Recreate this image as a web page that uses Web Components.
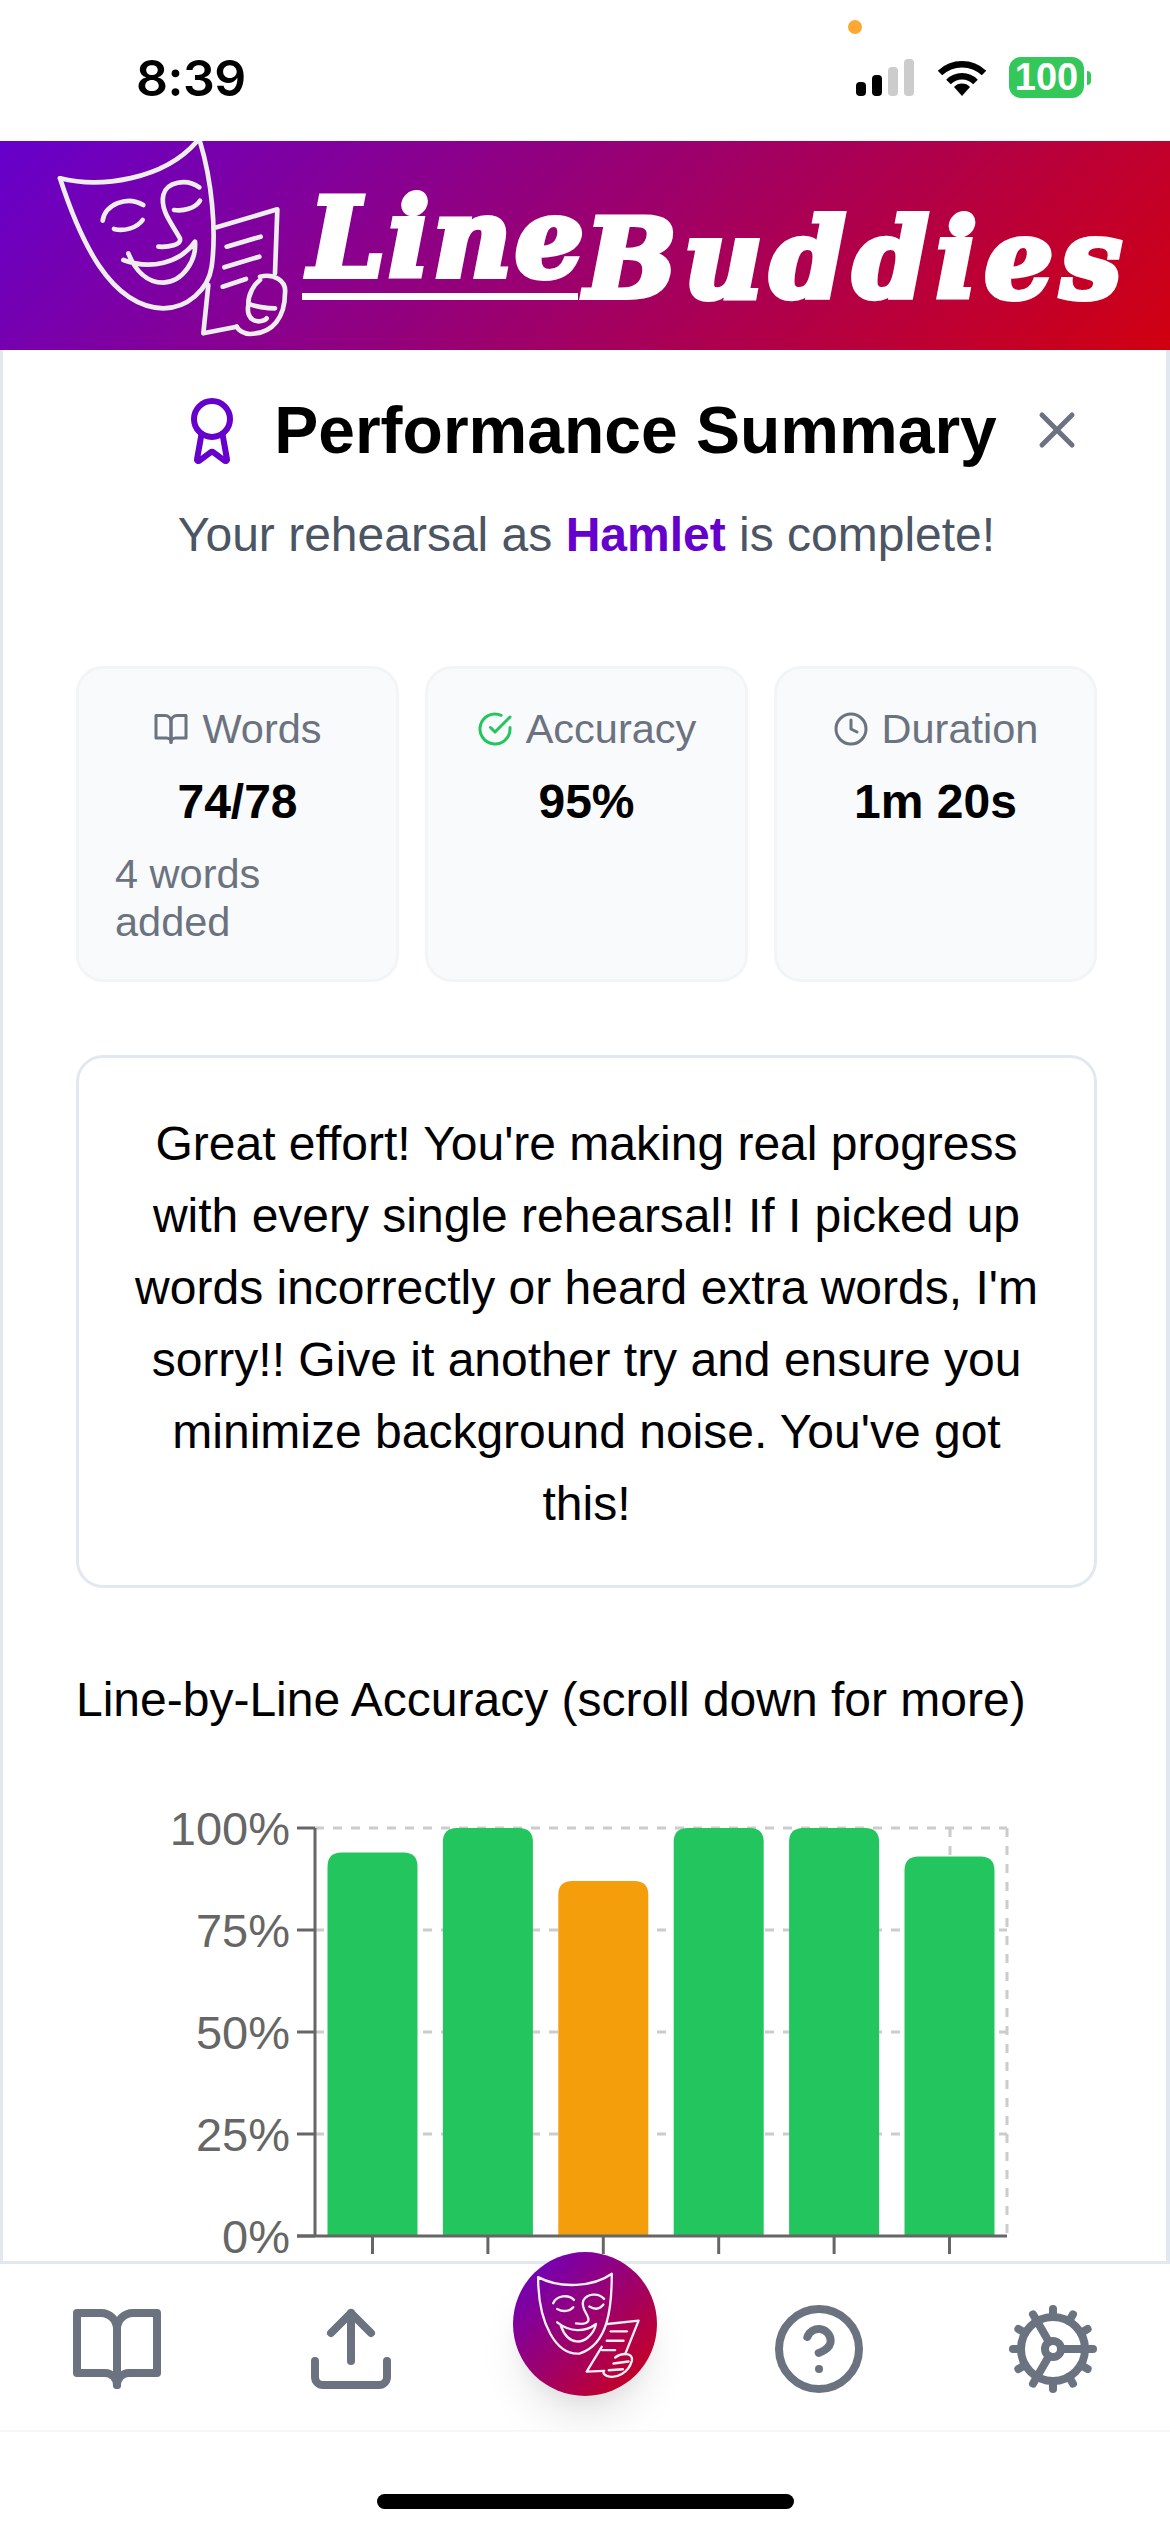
<!DOCTYPE html>
<html lang="en">
<head>
<meta charset="utf-8">
<title>LineBuddies</title>
<style>
  html, body { margin: 0; padding: 0; background: #fff; }
  body { font-family: "Liberation Sans", Arial, sans-serif; color: #000; }
</style>
</head>
<body>
<app-screen></app-screen>
<script>
const ICONS = {
  book: '<path d="M2 3h6a4 4 0 0 1 4 4v14a3 3 0 0 0-3-3H2z"/><path d="M22 3h-6a4 4 0 0 0-4 4v14a3 3 0 0 1 3-3h7z"/>',
  upload: '<path d="M21 15v4a2 2 0 0 1-2 2H5a2 2 0 0 1-2-2v-4"/><polyline points="17 8 12 3 7 8"/><line x1="12" y1="3" x2="12" y2="15"/>',
  help: '<circle cx="12" cy="12" r="10"/><path d="M9.09 9a3 3 0 0 1 5.83 1c0 2-3 3-3 3"/><path d="M12 17h.01"/>',
  cog: '<path d="M12 20a8 8 0 1 0 0-16 8 8 0 0 0 0 16Z"/><path d="M12 14a2 2 0 1 0 0-4 2 2 0 0 0 0 4Z"/><path d="M12 2v2"/><path d="M12 22v-2"/><path d="m17 20.66-1-1.73"/><path d="M11 10.27 7 3.34"/><path d="m20.66 17-1.73-1"/><path d="m3.34 7 1.73 1"/><path d="M14 12h8"/><path d="M2 12h2"/><path d="m20.66 7-1.73 1"/><path d="m3.34 17 1.73-1"/><path d="m17 3.34-1 1.73"/><path d="m11 13.73-4 6.93"/>',
  award: '<path d="m15.477 12.89 1.515 8.526a.5.5 0 0 1-.81.47l-3.58-2.687a1 1 0 0 0-1.197 0l-3.586 2.686a.5.5 0 0 1-.81-.469l1.514-8.526"/><circle cx="12" cy="8" r="6"/>',
  x: '<path d="M18 6 6 18"/><path d="m6 6 12 12"/>',
  check: '<path d="M22 11.08V12a10 10 0 1 1-5.93-9.14"/><path d="m9 11 3 3L22 4"/>',
  clock: '<circle cx="12" cy="12" r="10"/><polyline points="12 6 12 12 16 14"/>'
};

class LbIcon extends HTMLElement {
  connectedCallback() {
    const size = this.getAttribute('size') || 48;
    const color = this.getAttribute('color') || '#6b7280';
    this.attachShadow({ mode: 'open' });
    this.shadowRoot.innerHTML = `
      <style>
        :host { display: block; width: ${size}px; height: ${size}px; flex: none; }
        svg { display: block; }
      </style>
      <svg width="${size}" height="${size}" viewBox="0 0 24 24" fill="none" stroke="${color}"
        stroke-width="2" stroke-linecap="round" stroke-linejoin="round">${ICONS[this.getAttribute('name')]}</svg>
    `;
  }
}

class StatusBar extends HTMLElement {
  constructor() {
    super();
    this.attachShadow({ mode: 'open' });
    this.shadowRoot.innerHTML = `
      <style>
        :host {
          display: flex;
          align-items: flex-start;
          box-sizing: border-box;
          height: 141px;
          padding: 57px 79px 0 136px;
          background: #fff;
          position: relative;
        }
        #time {
          font: 600 50px/42px Inter, sans-serif;
          color: #000;
          letter-spacing: -0.5px;
        }
        #dot {
          position: absolute;
          left: 848px;
          top: 20px;
          width: 14px;
          height: 14px;
          border-radius: 50%;
          background: #ffa733;
        }
        #right { margin-left: auto; display: flex; align-items: flex-start; }
        #signal { display: flex; align-items: flex-end; gap: 6px; height: 37px; margin-top: 2px; }
        #signal i { display: block; width: 10px; border-radius: 4px; background: #000; }
        #signal i.off { background: #cccccc; }
        #wifi { margin: 2px 22px 0 23px; display: block; }
        #battery {
          width: 75px;
          height: 41px;
          border-radius: 12px;
          background: #34c759;
          color: #fff;
          font: 700 38px/41px "Liberation Sans", sans-serif;
          text-align: center;
        }
        #nub { width: 4px; height: 14px; margin: 14px 0 0 3px; background: #34c759; border-radius: 0 7px 7px 0; }
      </style>
      <span id="time">8:39</span>
      <span id="dot"></span>
      <div id="right">
        <div id="signal">
          <i style="height:14px"></i><i style="height:21px"></i>
          <i class="off" style="height:29px"></i><i class="off" style="height:37px"></i>
        </div>
        <svg id="wifi" width="50" height="37" viewBox="0 0 50 37" fill="none" stroke="#000" stroke-width="6.5">
          <path d="M3 14 A32 32 0 0 1 47 14"/>
          <path d="M11.5 23 A19 19 0 0 1 38.5 23"/>
          <path d="M17 28 A11 11 0 0 1 33 28 L25 37 Z" fill="#000" stroke="none"/>
        </svg>
        <div id="battery">100</div>
        <div id="nub"></div>
      </div>
    `;
  }
}

class LbBanner extends HTMLElement {
  constructor() {
    super();
    this.attachShadow({ mode: 'open' });
    this.shadowRoot.innerHTML = `
      <style>
        :host {
          display: flex;
          align-items: flex-start;
          height: 209px;
          padding-left: 40px;
          overflow: hidden;
          background: linear-gradient(135deg, #6600cc, #d10010);
        }
        svg { display: block; flex: none; margin-top: -11px; }
        .word {
          font: italic 700 108px/1 "DejaVu Serif", serif;
          color: #fff;
          -webkit-text-stroke: 6px #fff;
          white-space: nowrap;
          display: block;
        }
        #line { margin: 43px 0 0 -58px; display: flex; flex-direction: column; }
        #line .word { margin-left: 7px; letter-spacing: 3.5px; }
        #rule { width: 276px; height: 7px; background: #fff; margin-top: 1px; }
        #buddies { margin: 64px 0 0 -2px; letter-spacing: 7.5px; }
      </style>
      <svg width="320" height="220" viewBox="0 0 960 660" fill="none" stroke="#eeeeee" stroke-width="14"
        stroke-linecap="round" stroke-linejoin="round">
        <path d="M60 145 C180 175 370 150 470 35"/>
        <path d="M480 35 C515 150 530 300 515 410 C505 480 440 535 370 535 C210 530 120 330 60 145"/>
        <path d="M188 272 C195 225 260 195 310 225"/>
        <path d="M222 297 C250 305 290 295 308 270"/>
        <path d="M478 172 C440 145 380 155 370 195 C360 240 395 280 420 325 C425 345 385 352 355 350"/>
        <path d="M402 240 C430 245 465 235 480 212"/>
        <path d="M250 390 C330 420 420 400 465 335 C470 390 430 455 370 458 C320 458 285 420 265 370"/>
        <path d="M530 292 L712 238 L705 430"/>
        <path d="M505 465 L490 610 L590 590"/>
        <path d="M560 350 L662 320"/>
        <path d="M553 412 L658 380"/>
        <path d="M548 470 L618 447"/>
        <path d="M660 440 C700 430 740 450 735 490 C735 560 700 610 630 612 C610 612 595 600 590 590"/>
        <path d="M660 450 C640 465 625 495 625 520 C640 530 685 535 705 535"/>
        <path d="M625 525 C620 550 630 565 640 570 C655 578 675 572 680 565"/>
      </svg>
      <div id="line">
        <span class="word">Line</span>
        <div id="rule"></div>
      </div>
      <span class="word" id="buddies">Buddies</span>
    `;
  }
}

class StatCard extends HTMLElement {
  constructor() {
    super();
    this.attachShadow({ mode: 'open' });
    this.shadowRoot.innerHTML = `
      <style>
        :host {
          display: block;
          box-sizing: border-box;
          padding: 36px;
          height: 316px;
          background: #f9fafb;
          border: 3px solid #f3f4f6;
          border-radius: 27px;
        }
        #label {
          display: flex;
          align-items: center;
          justify-content: center;
          gap: 13px;
          font-size: 41.5px;
          line-height: 48px;
          color: #6b7280;
        }
        #value {
          margin-top: 13px;
          font-size: 48px;
          line-height: 72px;
          font-weight: 700;
          text-align: center;
          color: #000;
        }
        #sub {
          margin-top: 12px;
          font-size: 41.5px;
          line-height: 48px;
          color: #6b7280;
        }
      </style>
      <div id="label"><slot name="icon"></slot><slot name="label"></slot></div>
      <div id="value"><slot name="value"></slot></div>
      <div id="sub"><slot name="sub"></slot></div>
    `;
  }
}

class MessageCard extends HTMLElement {
  constructor() {
    super();
    this.attachShadow({ mode: 'open' });
    this.shadowRoot.innerHTML = `
      <style>
        :host {
          display: block;
          box-sizing: border-box;
          padding: 50px 48px 45px;
          border: 3px solid #e2e8f0;
          border-radius: 27px;
          text-align: center;
          font-size: 48px;
          line-height: 72px;
          color: #000;
        }
      </style>
      <slot></slot>
    `;
  }
}

class AccuracyChart extends HTMLElement {
  constructor() {
    super();
    this.attachShadow({ mode: 'open' });
    const values = [94, 100, 87, 100, 100, 93];
    const left = 239, right = 931, top = 48, bottom = 456, step = 115.4;
    const y = v => bottom - (bottom - top) * v / 100;
    let grid = '', labels = '', bars = '', ticks = '';
    [100, 75, 50, 25, 0].forEach(v => {
      if (v > 0) grid += `<line x1="${left}" x2="${right}" y1="${y(v)}" y2="${y(v)}"/>`;
      labels += `<text x="214" y="${y(v) + 17}">${v}%</text>`;
      ticks += `<line x1="221" x2="${left}" y1="${y(v)}" y2="${y(v)}"/>`;
    });
    values.forEach((v, i) => {
      const x = left + 12.5 + step * i;
      const t = y(v);
      const color = v < 90 ? '#f59e0b' : '#22c55e';
      bars += `<path fill="${color}" d="M${x} ${bottom} V${t + 14} Q${x} ${t} ${x + 14} ${t} H${x + 76} Q${x + 90} ${t} ${x + 90} ${t + 14} V${bottom} Z"/>`;
      ticks += `<line x1="${x + 45}" x2="${x + 45}" y1="${bottom}" y2="${bottom + 18}"/>`;
    });
    this.shadowRoot.innerHTML = `
      <style>
        :host { display: block; height: 482px; }
        svg { display: block; }
        text { font: 47px "Liberation Sans", sans-serif; fill: #666; text-anchor: end; }
      </style>
      <svg width="1021" height="482" viewBox="0 0 1021 482">
        <g stroke="#ccc" stroke-width="3" stroke-dasharray="9 9" fill="none">
          ${grid}
          <line x1="${right}" x2="${right}" y1="${top}" y2="${bottom}"/>
          <line x1="874" x2="874" y1="${top}" y2="${bottom}"/>
        </g>
        ${bars}
        <g stroke="#666" stroke-width="3" fill="none">
          ${ticks}
          <line x1="${left}" x2="${left}" y1="${top}" y2="${bottom}"/>
          <line x1="221" x2="${right}" y1="${bottom}" y2="${bottom}"/>
        </g>
        ${labels}
      </svg>
    `;
  }
}

class SummaryPanel extends HTMLElement {
  constructor() {
    super();
    this.attachShadow({ mode: 'open' });
    this.shadowRoot.innerHTML = `
      <style>
        :host {
          display: block;
          box-sizing: border-box;
          height: 1914px;
          padding: 45px 69px 0 73px;
          border: solid #e2e8f0;
          border-width: 0 4px 3px 3px;
          overflow: hidden;
          background: #fff;
        }
        header { position: relative; }
        #title {
          display: flex;
          align-items: center;
          justify-content: center;
          gap: 26px;
          height: 72px;
        }
        h1 { margin: -2px 0 0; font-size: 66px; line-height: 72px; font-weight: 700; color: #000; white-space: nowrap; }
        #close { position: absolute; right: 10px; top: 5px; }
        #subtitle { margin: 32px 0 0; font-size: 48px; line-height: 72px; text-align: center; color: #4b5563; }
        #subtitle b { color: #6600cc; }
        #stats {
          display: grid;
          grid-template-columns: repeat(3, 1fr);
          gap: 26px;
          margin-top: 95px;
        }
        message-card { margin-top: 73px; }
        h2 {
          margin: 76px 0 0;
          font-size: 48px;
          line-height: 72px;
          font-weight: 400;
          color: #000;
        }
        accuracy-chart { margin-top: 44px; }
      </style>
      <header>
        <div id="title">
          <lb-icon name="award" size="72" color="#6600cc"></lb-icon>
          <h1>Performance Summary</h1>
        </div>
        <lb-icon id="close" name="x" size="60"></lb-icon>
        <p id="subtitle">Your rehearsal as <b>Hamlet</b> is complete!</p>
      </header>
      <section id="stats"><slot name="stats"></slot></section>
      <message-card><slot name="message"></slot></message-card>
      <h2>Line-by-Line Accuracy (scroll down for more)</h2>
      <accuracy-chart></accuracy-chart>
    `;
  }
}

class BottomNav extends HTMLElement {
  constructor() {
    super();
    this.attachShadow({ mode: 'open' });
    this.shadowRoot.innerHTML = `
      <style>
        :host {
          display: grid;
          grid-template-columns: repeat(5, 1fr);
          justify-items: center;
          align-items: start;
          box-sizing: border-box;
          height: 166px;
          background: #fff;
          position: relative;
          z-index: 2;
        }
        lb-icon { margin-top: 37px; }
        #fab {
          width: 144px;
          height: 144px;
          margin-top: -12px;
          border-radius: 50%;
          background: linear-gradient(135deg, #6600cc, #d10010);
          box-shadow: 0 30px 45px -9px rgba(0,0,0,.1), 0 12px 18px -6px rgba(0,0,0,.05);
        }
        #fab svg { display: block; }
      </style>
      <lb-icon name="book" size="96"></lb-icon>
      <lb-icon name="upload" size="96"></lb-icon>
      <div id="fab">
        <svg width="144" height="144" viewBox="40 35 430 430" fill="none" stroke="#f4f0f4" stroke-width="7"
          stroke-linecap="round" stroke-linejoin="round">
          <path d="M115 110 C180 145 280 140 335 100 C335 200 325 310 240 338 C170 345 115 250 115 110Z"/>
          <path d="M160 188 C170 165 205 160 222 178"/>
          <path d="M172 205 C190 215 210 212 220 200"/>
          <path d="M312 175 C295 155 260 160 250 180 C240 205 270 225 265 240 C260 250 240 250 228 248"/>
          <path d="M268 198 C285 208 300 205 310 192"/>
          <path d="M172 245 C210 275 255 275 288 250 C280 285 250 305 230 302 C205 300 190 275 183 256"/>
          <path d="M322 250 L415 240 L375 340"/>
          <path d="M305 318 L260 392 L312 390"/>
          <path d="M332 272 L380 272"/>
          <path d="M320 300 L370 300"/>
          <path d="M306 328 L345 328"/>
          <path d="M345 350 C365 335 400 335 395 360 C385 395 350 415 320 405 C310 400 308 395 312 390"/>
          <path d="M340 368 L385 362"/>
          <path d="M326 388 L368 385"/>
        </svg>
      </div>
      <lb-icon name="help" size="96"></lb-icon>
      <lb-icon name="cog" size="96"></lb-icon>
    `;
  }
}

class HomeIndicator extends HTMLElement {
  constructor() {
    super();
    this.attachShadow({ mode: 'open' });
    this.shadowRoot.innerHTML = `
      <style>
        :host {
          display: flex;
          justify-content: center;
          box-sizing: border-box;
          height: 102px;
          padding-top: 62px;
          background: #fff;
          border-top: 2px solid #f7f7f8;
          position: relative;
          z-index: 3;
        }
        div { width: 417px; height: 15px; border-radius: 8px; background: #000; }
      </style>
      <div></div>
    `;
  }
}

class AppScreen extends HTMLElement {
  constructor() {
    super();
    this.attachShadow({ mode: 'open' });
    this.shadowRoot.innerHTML = `
      <style>
        :host { display: block; width: 1170px; height: 2532px; overflow: hidden; background: #fff; }
      </style>
      <status-bar></status-bar>
      <lb-banner></lb-banner>
      <summary-panel>
        <stat-card slot="stats">
          <lb-icon slot="icon" name="book" size="36"></lb-icon>
          <span slot="label">Words</span>
          <span slot="value">74/78</span>
          <span slot="sub">4 words added</span>
        </stat-card>
        <stat-card slot="stats">
          <lb-icon slot="icon" name="check" size="36" color="#22c55e"></lb-icon>
          <span slot="label">Accuracy</span>
          <span slot="value">95%</span>
        </stat-card>
        <stat-card slot="stats">
          <lb-icon slot="icon" name="clock" size="36"></lb-icon>
          <span slot="label">Duration</span>
          <span slot="value">1m 20s</span>
        </stat-card>
        <span slot="message">Great effort! You're making real progress with every single rehearsal! If I picked up words incorrectly or heard extra words, I'm sorry!! Give it another try and ensure you minimize background noise. You've got this!</span>
      </summary-panel>
      <bottom-nav></bottom-nav>
      <home-indicator></home-indicator>
    `;
  }
}

customElements.define('lb-icon', LbIcon);
customElements.define('status-bar', StatusBar);
customElements.define('lb-banner', LbBanner);
customElements.define('stat-card', StatCard);
customElements.define('message-card', MessageCard);
customElements.define('accuracy-chart', AccuracyChart);
customElements.define('summary-panel', SummaryPanel);
customElements.define('bottom-nav', BottomNav);
customElements.define('home-indicator', HomeIndicator);
customElements.define('app-screen', AppScreen);
</script>
</body>
</html>
